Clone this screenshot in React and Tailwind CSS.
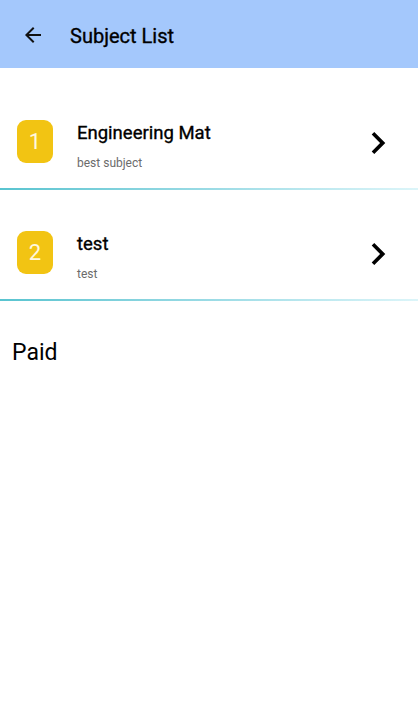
const subjects = [
  { id: 1, name: "Engineering Mat", desc: "best subject" },
  { id: 2, name: "test", desc: "test" },
];

const BackIcon = () => (
  <svg width="24" height="24" viewBox="0 0 24 24" fill="currentColor">
    <path d="M20 11H7.83l5.59-5.59L12 4l-8 8 8 8 1.41-1.41L7.83 13H20v-2z" />
  </svg>
);

const ChevronIcon = () => (
  <svg width="15" height="22" viewBox="8.3 6 8 12" fill="currentColor">
    <path d="M10 6L8.59 7.41 13.17 12l-4.58 4.59L10 18l6-6z" />
  </svg>
);

const SubjectRow = ({ subject }) => (
  <div className="flex flex-col">
    <div className="h-[109px] flex items-start pt-[41px] pl-[17px] pr-[32px]">
      <div className="w-[36px] h-[43px] rounded-[9px] bg-[#f2c413] flex items-center justify-center text-[22px] text-[#fff8e0] leading-none">
        {subject.id}
      </div>
      <div className="flex-1 ml-[24px] mt-[2px]">
        <div className="text-[18.5px] text-black leading-[22px] [-webkit-text-stroke:0.35px_black]">
          {subject.name}
        </div>
        <div className="text-[12px] text-[#6b6b6b] mt-[11px] leading-[16px]">
          {subject.desc}
        </div>
      </div>
      <div className="text-black mt-[12px]">
        <ChevronIcon />
      </div>
    </div>
    <div className="h-[2px] bg-gradient-to-r from-[#58c4d0] via-[#9adbe5] to-[#dcf5f9]" />
  </div>
);

export default function App() {
  return (
    <div
      className="w-[418px] h-[720px] bg-white"
      style={{ fontFamily: "Roboto, 'Noto Sans', sans-serif" }}
    >
      <div className="h-[68px] bg-[#a4c8fc] flex items-center pl-[21px] pt-[4px]">
        <span className="text-[#111] -mt-[2px]">
          <BackIcon />
        </span>
        <span className="ml-[25px] text-[20px] text-black [-webkit-text-stroke:0.35px_black]">
          Subject List
        </span>
      </div>
      <div className="pt-[11px]">
        {subjects.map((s) => (
          <SubjectRow key={s.id} subject={s} />
        ))}
      </div>
      <div className="px-[12px] mt-[39px] text-[23px] text-black leading-[26px]">
        Paid
      </div>
    </div>
  );
}
